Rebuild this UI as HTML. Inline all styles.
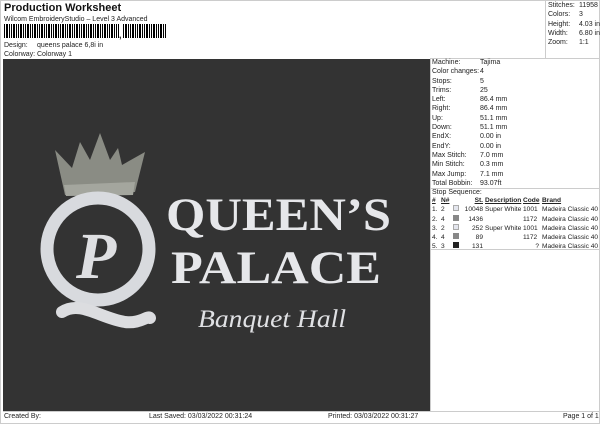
<!DOCTYPE html>
<html><head><style>
*{margin:0;padding:0;box-sizing:border-box}
body{width:600px;height:424px;background:#fff;font-family:"Liberation Sans",sans-serif;font-size:7px;color:#222;position:relative;overflow:hidden}
.a{position:absolute;white-space:nowrap}
.bar{position:absolute;top:24px;height:14px;background:repeating-linear-gradient(90deg,#000 0 1px,#fff 1px 2px,#000 2px 4px,#fff 4px 5px,#000 5px 6px,#fff 6px 7px)}
table{border-collapse:collapse}
td{padding:0;height:9.3px;line-height:9.3px}
</style></head><body>
<div style="position:absolute;left:0;top:0;width:600px;height:424px;border:1px solid #ccc"></div>
<div class="a" style="left:4px;top:2px;font-size:11px;font-weight:bold;color:#111">Production Worksheet</div>
<div class="a" style="left:4px;top:16px">Wilcom EmbroideryStudio – Level 3 Advanced</div>
<div class="bar" style="left:4px;width:115px"></div>
<div class="a" style="left:119px;top:30px;font-weight:bold;font-size:9px">,</div>
<div class="bar" style="left:123px;width:43px"></div>
<div class="a" style="left:4px;top:42px">Design:</div>
<div class="a" style="left:37px;top:42px">queens palace 6,8i in</div>
<div class="a" style="left:4px;top:51px">Colorway:</div>
<div class="a" style="left:37px;top:51px">Colorway 1</div>
<div style="position:absolute;left:545px;top:0;width:1px;height:59px;background:#ccc"></div>
<div style="position:absolute;left:430px;top:58px;width:170px;height:1px;background:#ccc"></div>
<table class="a" style="left:548px;top:1px"><tr><td style="width:35px">Stitches:</td><td>11958</td></tr><tr><td>Colors:</td><td>3</td></tr><tr><td>Height:</td><td>4.03 in</td></tr><tr><td>Width:</td><td>6.80 in</td></tr><tr><td>Zoom:</td><td>1:1</td></tr></table>
<div style="position:absolute;left:3px;top:59px;width:427px;height:352px;background:#333"></div>
<div style="position:absolute;left:430px;top:58px;width:1px;height:353px;background:#ccc"></div>
<table class="a" style="left:432px;top:58px"><tr><td style="width:48px">Machine:</td><td>Tajima</td></tr><tr><td>Color changes:</td><td>4</td></tr><tr><td>Stops:</td><td>5</td></tr><tr><td>Trims:</td><td>25</td></tr><tr><td>Left:</td><td>86.4 mm</td></tr><tr><td>Right:</td><td>86.4 mm</td></tr><tr><td>Up:</td><td>51.1 mm</td></tr><tr><td>Down:</td><td>51.1 mm</td></tr><tr><td>EndX:</td><td>0.00 in</td></tr><tr><td>EndY:</td><td>0.00 in</td></tr><tr><td>Max Stitch:</td><td>7.0 mm</td></tr><tr><td>Min Stitch:</td><td>0.3 mm</td></tr><tr><td>Max Jump:</td><td>7.1 mm</td></tr><tr><td>Total Bobbin:</td><td>93.07ft</td></tr></table>
<div style="position:absolute;left:430px;top:188px;width:170px;height:1px;background:#ccc"></div>
<div class="a" style="left:432px;top:189px">Stop Sequence:</div>
<div style="position:absolute;left:430px;top:249px;width:170px;height:1px;background:#ccc"></div>
<table class="a" style="left:432px;top:196px;font-size:6.6px">
<tr style="font-weight:bold;text-decoration:underline"><td style="width:9px">#</td><td style="width:12px">N#</td><td style="width:8px"></td><td style="width:22px;text-align:right">St.</td><td style="width:40px;padding-left:2px">Description</td><td style="width:19px">Code</td><td>Brand</td></tr>
<tr><td>1.</td><td>2</td><td><span style="display:inline-block;width:6px;height:6px;background:#e4e6ee;border:1px solid #aaa"></span></td><td style="text-align:right">10048</td><td style="padding-left:2px">Super White</td><td>1001</td><td>Madeira Classic 40</td></tr>
<tr><td>2.</td><td>4</td><td><span style="display:inline-block;width:6px;height:6px;background:#888"></span></td><td style="text-align:right">1436</td><td></td><td>1172</td><td>Madeira Classic 40</td></tr>
<tr><td>3.</td><td>2</td><td><span style="display:inline-block;width:6px;height:6px;background:#e4e6ee;border:1px solid #aaa"></span></td><td style="text-align:right">252</td><td style="padding-left:2px">Super White</td><td>1001</td><td>Madeira Classic 40</td></tr>
<tr><td>4.</td><td>4</td><td><span style="display:inline-block;width:6px;height:6px;background:#888"></span></td><td style="text-align:right">89</td><td></td><td>1172</td><td>Madeira Classic 40</td></tr>
<tr><td>5.</td><td>3</td><td><span style="display:inline-block;width:6px;height:6px;background:#222"></span></td><td style="text-align:right">131</td><td></td><td style="text-align:right;padding-right:3px">?</td><td>Madeira Classic 40</td></tr>
</table>
<svg style="position:absolute;left:0;top:0" width="430" height="411">
<polygon points="55,150 72,168 80,142 90,160 100,133 110,160 118,148 122,165 145,152 135,192 65,195" fill="#8a8c84"/>
<polygon points="64,185 135,182 133,195 66,196" fill="#a4a69e"/>
<circle cx="98" cy="249" r="51" fill="none" stroke="#d8dade" stroke-width="13"/>
<path d="M62,312 C80,300 100,318 125,322 C140,324 148,315 150,318" fill="none" stroke="#dcdde0" stroke-width="12" stroke-linecap="round"/>
<text x="76" y="278" font-family="Liberation Serif" font-style="italic" font-weight="bold" font-size="66" fill="#dedfe2">P</text>
<text x="166" y="230" font-family="Liberation Serif" font-weight="bold" font-size="47" fill="#e6e7ea" textLength="225" lengthAdjust="spacingAndGlyphs">QUEEN’S</text>
<text x="171" y="283" font-family="Liberation Serif" font-weight="bold" font-size="47" fill="#e6e7ea" textLength="210" lengthAdjust="spacingAndGlyphs">PALACE</text>
<text x="198" y="327" font-family="Liberation Serif" font-style="italic" font-size="25" fill="#e0e1e4" textLength="148" lengthAdjust="spacingAndGlyphs">Banquet Hall</text>
</svg>
<div style="position:absolute;left:3px;top:411px;width:596px;height:1px;background:#ccc"></div>
<div class="a" style="left:4px;top:413px">Created By:</div>
<div class="a" style="left:149px;top:413px">Last Saved: 03/03/2022 00:31:24</div>
<div class="a" style="left:328px;top:413px">Printed: 03/03/2022 00:31:27</div>
<div class="a" style="left:563px;top:413px">Page 1 of 1</div>
</body></html>
